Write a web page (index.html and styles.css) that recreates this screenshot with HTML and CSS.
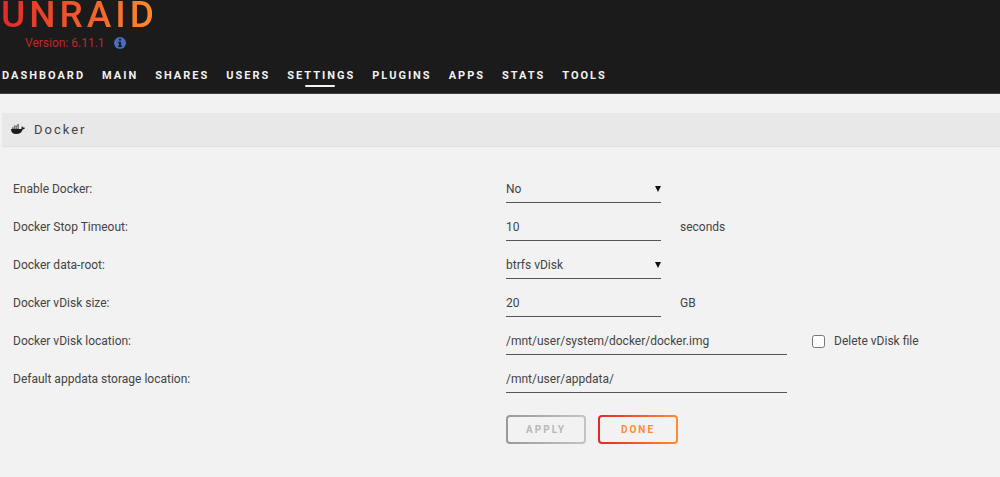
FILE: index.html
```
<!DOCTYPE html>
<html lang="en">
<head>
  <meta charset="UTF-8">
  <title>Docker Settings</title>
  <meta name="viewport" content="width=device-width, initial-scale=1.0">
  <link rel="stylesheet" href="styles.css">
</head>
<body>
  <header>
    <a href="#" class="logo">UNRAID</a>
    <div class="version">
      <span>Version: 6.11.1</span>
      <a href="#" aria-label="Release notes">
        <svg width="12" height="12" viewBox="0 0 12 12">
          <circle cx="6" cy="6" r="6" fill="#486dba"/>
          <path d="M5 1.7h2v1.8H5zM4.2 4.7H7v3.8h.9V10H4.2V8.500H5V6.100h-.8z" fill="#1c1b1b"/>
        </svg>
      </a>
    </div>
    <nav>
      <a href="#">Dashboard</a>
      <a href="#">Main</a>
      <a href="#">Shares</a>
      <a href="#">Users</a>
      <a href="#" class="active">Settings</a>
      <a href="#">Plugins</a>
      <a href="#">Apps</a>
      <a href="#">Stats</a>
      <a href="#">Tools</a>
    </nav>
  </header>
  <main>
    <h1 class="title">
      <svg width="14" height="11" viewBox="0 0 14 11" fill="#1c1b1b">
        <path d="M0 5h9.600c.8 0 1.100-.3 1-1-.2-.7 0-1.300.5-1.800.5.4.8.9.9 1.400.7-.1 1.400 0 2 .4-.4.9-1.200 1.200-2.200 1.200C10.700 8.500 8.600 10 5.200 10 1.700 10 0 8.200 0 5z"/>
        <path d="M1 3.200h1.500v1.800H1zM2.800 3.200h1.500v1.800H2.800zM4.600 3.200h1.500v1.800H4.600zM6.400 3.200h1.500v1.800H6.400zM2.800 1.600h1.500V3H2.800zM4.600 1.600h1.500V3H4.600zM6.400 1.600h1.500V3H6.400zM6.400 0h1.500v1.400H6.400z" opacity=".6"/>
      </svg>
      Docker
    </h1>
    <form>
      <div class="row">
        <label for="enable">Enable Docker:</label>
        <div class="field">
          <span class="select"><select id="enable"><option>No</option><option>Yes</option></select></span>
        </div>
      </div>
      <div class="row">
        <label for="timeout">Docker Stop Timeout:</label>
        <div class="field">
          <input type="text" id="timeout" value="10">
          <span>seconds</span>
        </div>
      </div>
      <div class="row">
        <label for="root">Docker data-root:</label>
        <div class="field">
          <span class="select"><select id="root"><option>btrfs vDisk</option><option>xfs vDisk</option><option>directory</option></select></span>
        </div>
      </div>
      <div class="row">
        <label for="size">Docker vDisk size:</label>
        <div class="field">
          <input type="text" id="size" value="20">
          <span>GB</span>
        </div>
      </div>
      <div class="row">
        <label for="image">Docker vDisk location:</label>
        <div class="field">
          <input type="text" id="image" class="wide" value="/mnt/user/system/docker/docker.img">
          <label class="check"><input type="checkbox"> Delete vDisk file</label>
        </div>
      </div>
      <div class="row">
        <label for="appdata">Default appdata storage location:</label>
        <div class="field">
          <input type="text" id="appdata" class="wide" value="/mnt/user/appdata/">
        </div>
      </div>
      <div class="row actions">
        <div class="buttons">
          <button type="submit" disabled>Apply</button>
          <button type="button">Done</button>
        </div>
      </div>
    </form>
  </main>
</body>
</html>
```
FILE: styles.css
```
* { box-sizing: border-box; }
body { margin: 0; background: #f2f2f2; color: #444; font-family: Roboto, Arial, sans-serif; font-size: 12px; line-height: 16px; }

header { background: #1c1b1b; padding-bottom: 9px; border-bottom: 1px solid #444; }
.logo { display: block; width: max-content; height: 34px; line-height: 29px; padding-left: 1px; font-size: 37px; font-weight: 500; letter-spacing: 4px; text-decoration: none; color: transparent; background: linear-gradient(90deg, #e22828, #ff8c2f); background-clip: text; -webkit-background-clip: text; }
.version { display: flex; align-items: center; gap: 9px; height: 18px; padding-left: 25px; color: #c1272d; }
.version a { display: flex; }
nav { display: flex; gap: 17px; padding: 16px 0 0 2px; }
nav a { position: relative; font-size: 11px; font-weight: 700; letter-spacing: 2px; text-transform: uppercase; text-decoration: none; color: #f2f2f2; }
nav a.active::after { content: ""; position: absolute; left: 50%; bottom: -3px; width: 30px; height: 2px; margin-left: -16px; border-radius: 1px; background: #f2f2f2; }

.title { display: flex; align-items: center; gap: 9px; height: 34px; margin: 19px 0 23px 2px; padding-left: 9px; background: #e8e8e8; border-bottom: 1px solid #e0e0e0; font-size: 13px; font-weight: 400; letter-spacing: 2px; }

form { padding: 0 1px 30px 13px; }
.row { display: grid; grid-template-columns: 1fr 1fr; height: 38px; align-items: center; }
.field { display: flex; align-items: center; }
.field > span:not(.select) { margin-left: 19px; }
input[type="text"], select { display: block; width: 155px; height: 28px; padding: 0; border: 0; border-bottom: 1px solid #555; border-radius: 0; background: none; color: #444; font: inherit; outline: none; appearance: none; }
input.wide { width: 281px; }
.select { position: relative; }
.select::after { content: ""; position: absolute; right: 0; top: 11px; border: 3px solid transparent; border-top: 6px solid #111; border-bottom: 0; pointer-events: none; }
.check { display: flex; align-items: center; gap: 9px; margin-left: 25px; }
.check input { width: 13px; height: 13px; margin: 0; }

.actions { height: auto; padding-top: 17px; }
.buttons { grid-column: 2; display: flex; gap: 12px; }
button { width: 80px; height: 29px; padding: 0; border: 2px solid transparent; border-radius: 4px; background: linear-gradient(#f2f2f2, #f2f2f2) padding-box, linear-gradient(90deg, #e22828, #ff8c2f) border-box; color: #ff8c2f; font-family: inherit; font-size: 10px; font-weight: 700; letter-spacing: 2px; text-transform: uppercase; cursor: pointer; }
button:disabled { background: linear-gradient(#f2f2f2, #f2f2f2) padding-box, linear-gradient(90deg, #999, #c4c4c4) border-box; color: #b8b8b8; cursor: default; }
```
